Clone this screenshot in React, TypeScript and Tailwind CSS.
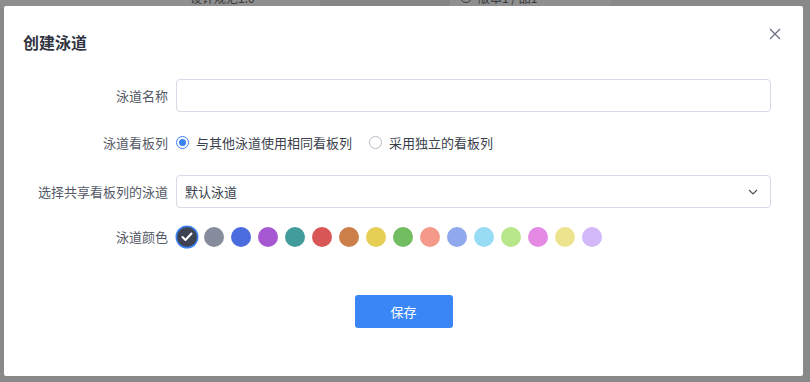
import React from "react";

const colors = [
  "#3d4353",
  "#878c9c",
  "#4a6cde",
  "#a558d2",
  "#439c9c",
  "#d95657",
  "#cd7f4a",
  "#e6cf55",
  "#72bc62",
  "#f59a8a",
  "#8fa9ec",
  "#97dbf5",
  "#b8e68a",
  "#e48ae4",
  "#ede38e",
  "#d3b8f8",
];

function Row({ label, children, className }: { label: string; children: React.ReactNode; className?: string }) {
  return (
    <div className={"flex items-center h-[33px] " + (className ?? "")}>
      <div className="w-[164px] text-right text-[13px] text-[#545966] leading-none shrink-0">{label}</div>
      <div className="ml-[8px] flex-1 flex items-center h-full">{children}</div>
    </div>
  );
}

export default function App() {
  return (
    <div
      className="relative w-[810px] h-[382px] bg-[#898989] overflow-hidden"
      style={{ fontFamily: '"Noto Sans CJK SC", "Noto Sans", sans-serif' }}
    >
      {/* backdrop hint of cards */}
      <div className="absolute top-0 left-0 w-full h-[8px] flex">
        <div className="w-[160px] h-full bg-[#8e8e8e]" />
        <div className="w-[160px] h-full bg-[#8f8f8f] relative">
          <span className="absolute left-[30px] top-[-9px] text-[12px] leading-[14px] text-[#3a3a3a]">设计规范1.0</span>
        </div>
        <div className="w-[130px] h-full bg-[#868686]" />
        <div className="w-[160px] h-full bg-[#8f8f8f] relative">
          <span className="absolute left-[10px] top-[-9px] w-[12px] h-[12px] rounded-full border border-[#3a3a3a]" />
          <span className="absolute left-[28px] top-[-9px] text-[12px] leading-[14px] text-[#3a3a3a]">版本1 / 品1</span>
        </div>
      </div>

      <div className="absolute left-[4px] top-[6px] w-[799px] h-[370px] bg-white rounded-[2px]">
        <div className="px-[19px] pt-[26px]">
          <div className="h-[20px] flex items-center text-[16px] font-semibold text-[#2f3441]">创建泳道</div>
        </div>
        <button className="absolute left-[765px] top-[22px] w-[12px] h-[12px] flex items-center justify-center">
          <svg width="12" height="12" viewBox="0 0 12 12">
            <path d="M1 1 L11 11 M11 1 L1 11" stroke="#6b7080" strokeWidth="1.3" fill="none" />
          </svg>
        </button>

        <div className="mt-[27px] pr-[32px]">
          <Row label="泳道名称">
            <div className="w-full h-[33px] border border-[#d7dae6] rounded-[4px]" />
          </Row>
          <Row label="泳道看板列" className="mt-[14px]">
            <label className="flex items-center">
              <span className="w-[13px] h-[13px] rounded-full border-[1px] border-[#3b82f6] flex items-center justify-center">
                <span className="w-[7px] h-[7px] rounded-full bg-[#3b82f6]" />
              </span>
              <span className="ml-[7px] text-[13px] text-[#3a3f4b]">与其他泳道使用相同看板列</span>
            </label>
            <label className="flex items-center ml-[17px]">
              <span className="w-[13px] h-[13px] rounded-full border-[1px] border-[#b5b9c4]" />
              <span className="ml-[7px] text-[13px] text-[#3a3f4b]">采用独立的看板列</span>
            </label>
          </Row>
          <Row label="选择共享看板列的泳道" className="mt-[16px]">
            <div className="w-full h-[33px] border border-[#d7dae6] rounded-[4px] flex items-center pl-[8px] pr-[12px]">
              <span className="text-[13px] text-[#3a3f4b] flex-1">默认泳道</span>
              <svg width="10" height="6" viewBox="0 0 10 6">
                <path d="M1 1 L5 5 L9 1" stroke="#4a4f5c" strokeWidth="1.2" fill="none" />
              </svg>
            </div>
          </Row>
          <Row label="泳道颜色" className="mt-[12px]">
            <div className="flex items-center gap-[7px] ml-[1px]">
              {colors.map((c, i) => (
                <div
                  key={c}
                  className={
                    "w-[20px] h-[20px] rounded-full flex items-center justify-center " +
                    (i === 0 ? "ring-[1.5px] ring-[#3b82f6] ring-offset-0" : "")
                  }
                  style={{ backgroundColor: c }}
                >
                  {i === 0 && (
                    <svg width="12" height="10" viewBox="0 0 12 10">
                      <path d="M1.5 5 L4.5 8 L10.5 1.5" stroke="#ffffff" strokeWidth="2" fill="none" strokeLinecap="round" strokeLinejoin="round" />
                    </svg>
                  )}
                </div>
              ))}
            </div>
          </Row>
        </div>

        <div className="flex justify-center mt-[42px]">
          <button className="w-[98px] h-[33px] rounded-[3px] bg-[#3b86f7] text-white text-[13px]">保存</button>
        </div>
      </div>
    </div>
  );
}
